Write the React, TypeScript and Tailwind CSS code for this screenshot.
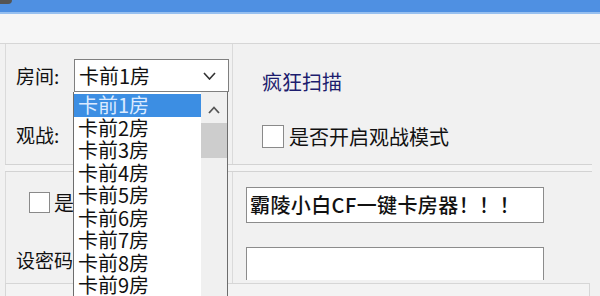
import React from "react";

const font = { fontFamily: '"Noto Sans CJK SC", "Noto Sans", sans-serif' };

function Checkbox({ size }: { size: string }) {
  return <div className={`${size} shrink-0 border border-[#8a8a8a] bg-white`} />;
}

export default function App() {
  const items = ["卡前1房", "卡前2房", "卡前3房", "卡前4房", "卡前5房", "卡前6房", "卡前7房", "卡前8房", "卡前9房"];
  return (
    <div
      className="relative w-[600px] h-[296px] overflow-hidden bg-[#f1f1f1] text-[#111] flex flex-col"
      style={font}
    >
      {/* title bar */}
      <div className="h-[14px] shrink-0 bg-[#4f90e2] border-b-2 border-[#97c0f0]">
        <div className="h-[4px] w-[12px] rounded-br-full bg-[#555]" />
      </div>
      {/* top strip */}
      <div className="h-[30px] shrink-0 bg-[#f6f6f6] border-b border-[#d6d6d6]" />

      {/* section A */}
      <div className="flex h-[120px] shrink-0 pl-[5px]">
        <div className="w-[227px] border-l border-[#dadada] pt-[15px] pl-[10px] flex flex-col">
          <div className="flex items-center h-[33px]">
            <span className="text-[19px] leading-[24px] w-[58px]">房间:</span>
            <div className="flex items-center justify-between w-[155px] h-[33px] border border-[#7f7f7f] bg-white pl-[4px] pr-[12px]">
              <span className="text-[20px] leading-[24px]">卡前1房</span>
              <svg width="13" height="8" viewBox="0 0 13 8">
                <polyline points="1,1 6.5,7 12,1" fill="none" stroke="#333" strokeWidth="1.6" />
              </svg>
            </div>
          </div>
          <div className="flex items-center h-[33px] mt-[26px]">
            <span className="text-[19px] leading-[24px]">观战:</span>
          </div>
        </div>
        <div className="flex-1 border-l border-[#dadada] pl-[29px] pt-[26px] flex flex-col">
          <span className="text-[20px] leading-[24px] text-[#1d1d6e]">疯狂扫描</span>
          <div className="flex items-center gap-[5px] mt-[31px] h-[23px]">
            <Checkbox size="w-[22px] h-[23px]" />
            <span className="text-[20px] leading-[24px]">是否开启观战模式</span>
          </div>
        </div>
      </div>

      {/* separator */}
      <div className="h-[8px] shrink-0 ml-[5px] mr-[8px] border-t border-b border-[#d3d3d3] bg-[#f4f4f4]" />

      {/* section B */}
      <div className="flex h-[111px] shrink-0 pl-[5px]">
        <div className="w-[227px] border-l border-[#dadada] flex flex-col pt-[20px]">
          <div className="flex items-center gap-[4px] pl-[23px] h-[21px]">
            <Checkbox size="w-[21px] h-[21px]" />
            <span className="text-[20px] leading-[24px]">是</span>
          </div>
          <span className="mt-[35px] pl-[10px] text-[19px] leading-[24px]">设密码</span>
        </div>
        <div className="flex-1 border-l border-[#dadada] pl-[13px] pr-[56px] pt-[15px] flex flex-col">
          <div className="h-[36px] border border-[#8c8c8c] bg-white flex items-center pl-[3px]">
            <span className="text-[20px] leading-[24px] font-medium tracking-[0.4px]">霸陵小白CF一键卡房器！！！</span>
          </div>
          <div className="h-[33px] mt-[24px] border border-[#8c8c8c] border-b-0 bg-white" />
        </div>
      </div>

      {/* bottom box */}
      <div className="flex-1 ml-[5px] mr-[10px] border-t border-r border-l border-[#d6d6d6] bg-[#f3f3f3]" />

      {/* dropdown list popup */}
      <div className="absolute left-[73px] top-[92px] w-[155px] h-[210px] bg-white border-l border-r border-[#6d6d6d] flex">
        <div className="flex-1 pt-[2px] flex flex-col">
          {items.map((t, i) => (
            <div
              key={t}
              className={`h-[22.5px] shrink-0 flex items-center pl-[4px] text-[20px] leading-[22px] ${
                i === 0 ? "bg-[#3c8ee3] text-[#dbeaff]" : "text-[#111]"
              }`}
            >
              {t}
            </div>
          ))}
        </div>
        <div className="w-[26px] bg-[#f0f0f0] flex flex-col items-center">
          <div className="h-[31px] w-full flex items-center justify-center pt-[4px]">
            <svg width="12" height="8" viewBox="0 0 12 8">
              <polyline points="1,7 6,1.5 11,7" fill="none" stroke="#555" strokeWidth="1.8" />
            </svg>
          </div>
          <div className="w-full h-[35px] bg-[#cdcdcd]" />
        </div>
      </div>
    </div>
  );
}
